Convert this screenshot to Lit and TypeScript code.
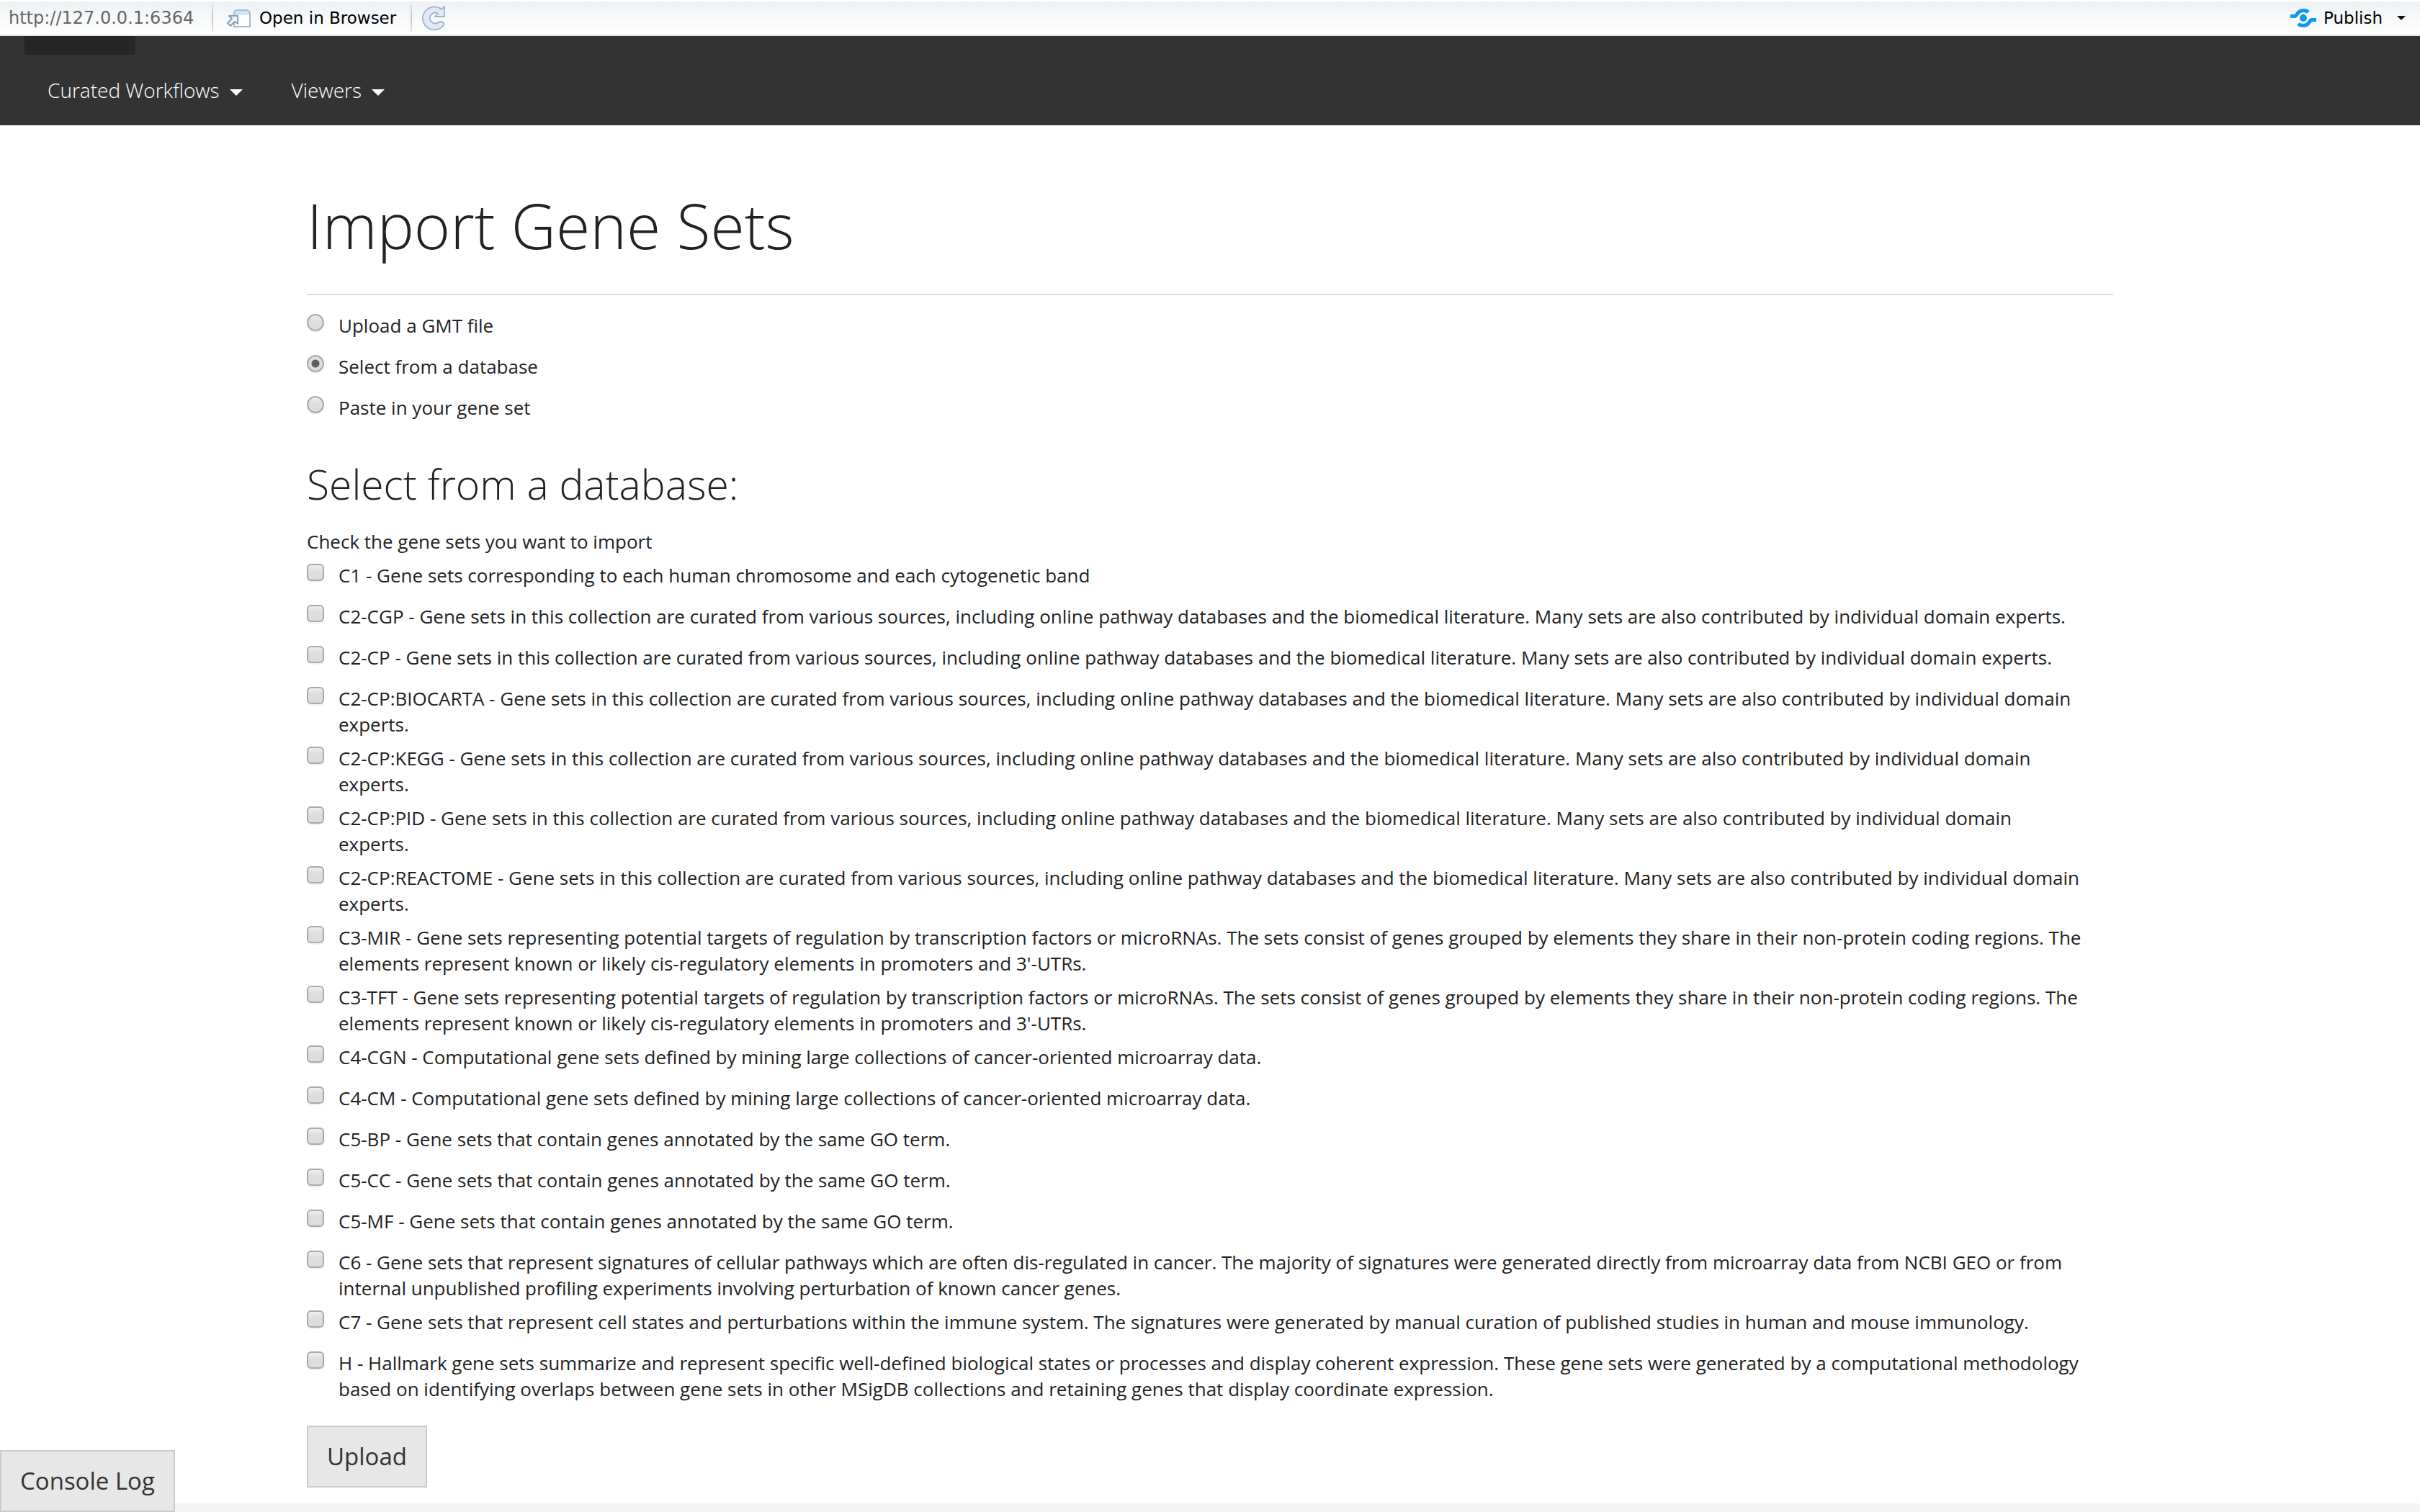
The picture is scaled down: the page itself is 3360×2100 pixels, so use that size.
import { LitElement, html, css, svg } from "lit";
import { customElement, state } from "lit/decorators.js";

const SOURCES = ["Upload a GMT file", "Select from a database", "Paste in your gene set"];

const CURATED =
  "Gene sets in this collection are curated from various sources, including online pathway databases and the biomedical literature. Many sets are also contributed by individual domain experts.";
const MOTIFS =
  "Gene sets representing potential targets of regulation by transcription factors or microRNAs. The sets consist of genes grouped by elements they share in their non-protein coding regions. The elements represent known or likely cis-regulatory elements in promoters and 3'-UTRs.";
const CANCER =
  "Computational gene sets defined by mining large collections of cancer-oriented microarray data.";
const ONTOLOGY = "Gene sets that contain genes annotated by the same GO term.";

const GENE_SETS: [string, string][] = [
  ["C1", "Gene sets corresponding to each human chromosome and each cytogenetic band"],
  ["C2-CGP", CURATED],
  ["C2-CP", CURATED],
  ["C2-CP:BIOCARTA", CURATED],
  ["C2-CP:KEGG", CURATED],
  ["C2-CP:PID", CURATED],
  ["C2-CP:REACTOME", CURATED],
  ["C3-MIR", MOTIFS],
  ["C3-TFT", MOTIFS],
  ["C4-CGN", CANCER],
  ["C4-CM", CANCER],
  ["C5-BP", ONTOLOGY],
  ["C5-CC", ONTOLOGY],
  ["C5-MF", ONTOLOGY],
  ["C6", "Gene sets that represent signatures of cellular pathways which are often dis-regulated in cancer. The majority of signatures were generated directly from microarray data from NCBI GEO or from internal unpublished profiling experiments involving perturbation of known cancer genes."],
  ["C7", "Gene sets that represent cell states and perturbations within the immune system. The signatures were generated by manual curation of published studies in human and mouse immunology."],
  ["H", "Hallmark gene sets summarize and represent specific well-defined biological states or processes and display coherent expression. These gene sets were generated by a computational methodology based on identifying overlaps between gene sets in other MSigDB collections and retaining genes that display coordinate expression."],
];

const windowIcon = html`<svg width="34" height="28" viewBox="0 0 34 28" aria-hidden="true">
  ${svg`<path d="M11 8q0-5 5-5h11q6 0 6 6v17H11z" fill="#fcfdfe" stroke="#a9bbcb" stroke-width="2"/>
  <path d="M12 10V8q0-4 4-4h11q5 0 5 5v1z" fill="#cfe4fb"/>
  <path d="M4 11h12v11l-4-3-6 6-4-4 6-6z" fill="#eef3f8" stroke="#8fa0b1" stroke-width="2" stroke-linejoin="round"/>`}
</svg>`;

const reloadIcon = html`<svg width="34" height="36" viewBox="0 0 34 36" aria-hidden="true">
  ${svg`<path d="M31 2V16H18L22 11.500A7.500 7.500 0 1 0 23 24Q26 22 29 24Q32 27 29 29A16 16 0 1 1 27 6Z" fill="#dfe8f9" stroke="#a7b2c7" stroke-width="1.800" stroke-linejoin="round"/>`}
</svg>`;

const publishIcon = html`<svg width="36" height="28" viewBox="0 0 36 28" aria-hidden="true">
  ${svg`<g fill="none" stroke="#0c9aea" stroke-width="5" stroke-linejoin="round">
  <path d="M0 11.500H6C10 11.500 9 3.500 18 3.500C21 3.500 23 4 25 6"/>
  <path d="M36 16.500H30C26 16.500 27 24.500 18 24.500C15 24.500 13 24 11 22"/></g>
  <circle cx="18" cy="14" r="5" fill="#0c9aea"/>`}
</svg>`;

@customElement("app-root")
export class AppRoot extends LitElement {
  @state() private source = 1;

  static styles = css`
    :host {
      display: flex;
      flex-direction: column;
      min-height: 100vh;
      background: #f4f4f4;
      color: #222;
      font-family: "Open Sans", "Noto Sans", sans-serif;
      font-size: 26px;
      line-height: 36px;
    }
    * {
      box-sizing: border-box;
    }
    svg {
      display: block;
      flex: none;
    }
    button {
      font-family: inherit;
      cursor: pointer;
    }

    .toolbar {
      display: flex;
      align-items: center;
      height: 50px;
      padding: 0 20px 0 12px;
      border-top: 2px solid #fff;
      border-bottom: 2px solid #e4e7ea;
      background: linear-gradient(#eef2f4, #fff);
      font-family: "DejaVu Sans", sans-serif;
      font-size: 23px;
      line-height: 30px;
    }
    .address {
      width: 282px;
      color: #666;
      font-size: 24px;
    }
    .divider {
      width: 2px;
      height: 38px;
      background: linear-gradient(#dfe2e4, #c3c6c8, #e4e6e8);
    }
    .tool {
      display: flex;
      align-items: center;
      gap: 12px;
      padding: 0 20px 0 18px;
      border: 0;
      background: none;
      color: #000;
      font-size: inherit;
      line-height: inherit;
    }
    .reload {
      padding: 0 14px;
    }
    .publish {
      gap: 10px;
      margin-left: auto;
      padding: 0;
    }
    .tool-caret {
      margin-left: 10px;
      border: 6px solid transparent;
      border-top-color: #111;
      border-bottom: 0;
    }

    .navbar {
      background: #333;
    }
    .tab {
      width: 154px;
      height: 26px;
      margin-left: 34px;
      background: #262626;
    }
    .menus {
      display: flex;
      align-items: center;
      gap: 68px;
      height: 98px;
      padding-left: 66px;
    }
    .menu {
      display: flex;
      align-items: center;
      gap: 14px;
      color: #fff;
      font-size: 28px;
      font-weight: 300;
      text-decoration: none;
    }
    .caret {
      margin-top: 6px;
      border: 9px solid transparent;
      border-top-color: #fff;
      border-bottom: 0;
    }

    .page {
      background: #fff;
      padding: 79px 24px 22px;
    }
    .content {
      max-width: 2508px;
      margin: 0 auto;
    }
    h1,
    h2,
    p {
      margin: 0;
      font-weight: 300;
    }
    h1 {
      padding-bottom: 35px;
      border-bottom: 2px solid #ddd;
      font-size: 86px;
      line-height: 120px;
    }
    h2 {
      font-size: 57px;
      line-height: 80px;
    }
    p {
      margin: 22px 0 11px;
      font-weight: 400;
    }
    fieldset {
      margin: 0;
      padding: 0;
      border: 0;
    }
    .sources {
      margin: 24px 0 27px;
    }
    .gene-sets {
      padding-right: 40px;
    }
    .option {
      display: flex;
      align-items: flex-start;
      gap: 20px;
      min-height: 46px;
      margin-bottom: 11px;
    }
    input {
      appearance: none;
      flex: none;
      width: 24px;
      height: 24px;
      margin: 2px 0 0;
      border: 2px solid #aaa;
      border-radius: 6px;
      background: linear-gradient(#eee, #dedede 40%, #dcdcdc);
      box-shadow: 0 2px 0 #f2f2f2;
    }
    input[type="radio"] {
      border-radius: 50%;
    }
    input[type="radio"]:checked {
      background: radial-gradient(circle, #606060 5px, #dedede 6px);
    }
    input[type="checkbox"]:checked {
      background: #606060;
    }

    .button {
      padding: 17px 26px;
      border: 2px solid #ccc;
      background: #e7e7e7;
      color: #333;
      font-size: 33px;
      line-height: 48px;
    }
    .upload {
      display: block;
      margin-top: 22px;
    }
    .console {
      position: fixed;
      left: 0;
      bottom: 0;
    }
  `;

  render() {
    return html`
      <header class="toolbar">
        <span class="address">http://127.0.0.1:6364</span>
        <span class="divider"></span>
        <button class="tool">${windowIcon}Open in Browser</button>
        <span class="divider"></span>
        <button class="tool reload" aria-label="Reload">${reloadIcon}</button>
        <button class="tool publish">
          ${publishIcon}Publish<span class="tool-caret"></span>
        </button>
      </header>
      <nav class="navbar">
        <div class="tab"></div>
        <div class="menus">
          <a class="menu" href="#workflows">Curated Workflows<span class="caret"></span></a>
          <a class="menu" href="#viewers">Viewers<span class="caret"></span></a>
        </div>
      </nav>
      <main class="page">
        <div class="content">
          <h1>Import Gene Sets</h1>
          <fieldset class="sources">
            ${SOURCES.map(
              (name, i) => html`<label class="option">
                <input
                  type="radio"
                  name="source"
                  .checked=${i === this.source}
                  @change=${() => (this.source = i)}
                />
                <span>${name}</span>
              </label>`
            )}
          </fieldset>
          <h2>Select from a database:</h2>
          <p>Check the gene sets you want to import</p>
          <fieldset class="gene-sets">
            ${GENE_SETS.map(
              ([code, text]) => html`<label class="option">
                <input type="checkbox" name="gene-set" value=${code} />
                <span>${`${code} - ${text}`}</span>
              </label>`
            )}
          </fieldset>
          <button class="button upload">Upload</button>
        </div>
      </main>
      <button class="button console">Console Log</button>
    `;
  }
}
